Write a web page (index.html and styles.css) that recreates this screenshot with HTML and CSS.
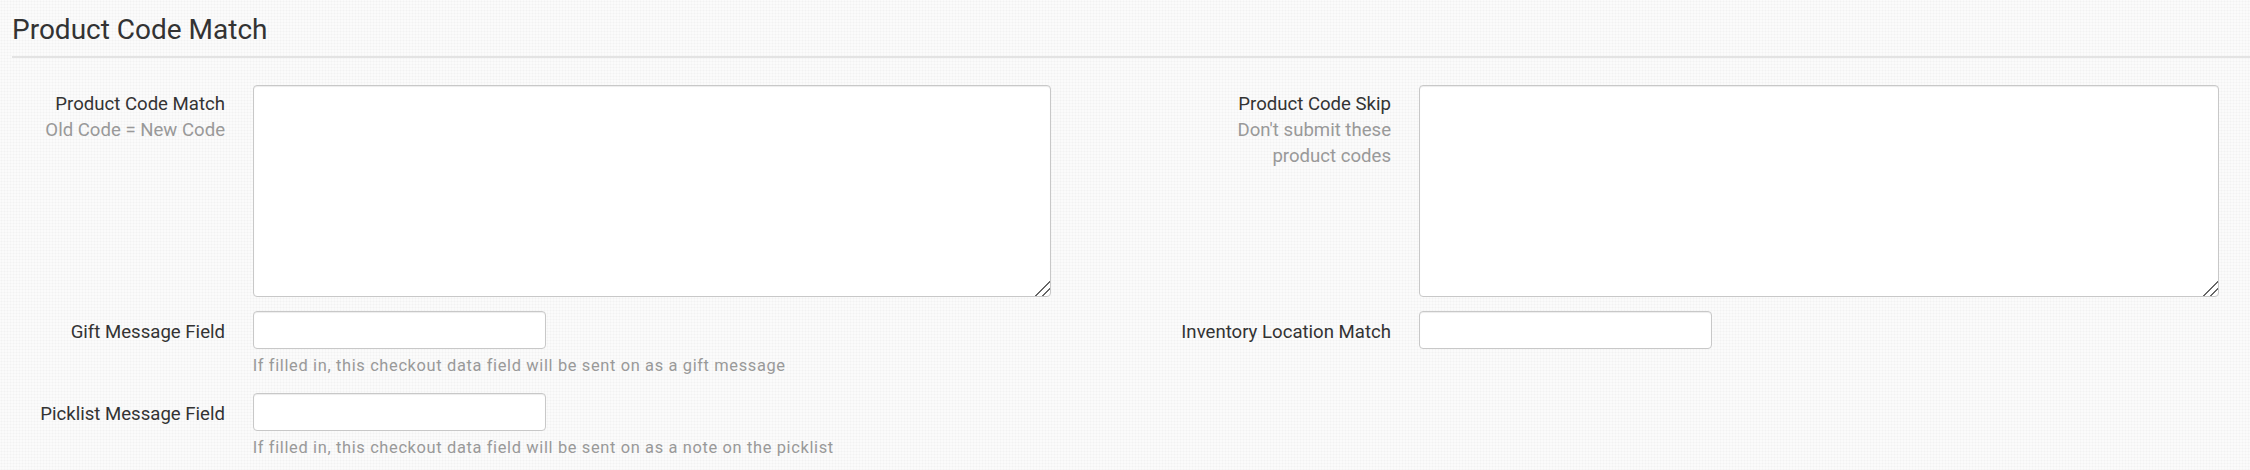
FILE: index.html
```html
<!DOCTYPE html>
<html lang="en">
<head>
<meta charset="utf-8">
<title>Product Code Match</title>
<link rel="stylesheet" href="styles.css">
</head>
<body>
<div class="page">
  <h3 class="section-title">Product Code Match</h3>
  <div class="rule"></div>
  <form class="form">
    <div class="row">
      <div class="group group-left">
        <label class="label">Product Code Match<span class="desc">Old Code = New Code</span></label>
        <div class="field"><textarea class="textarea textarea-left"></textarea></div>
      </div>
      <div class="group">
        <label class="label">Product Code Skip<span class="desc">Don't submit these product codes</span></label>
        <div class="field"><textarea class="textarea textarea-right"></textarea></div>
      </div>
    </div>
    <div class="row">
      <div class="group group-left">
        <label class="label label-input">Gift Message Field</label>
        <div class="field">
          <input class="input" type="text">
          <p class="help">If filled in, this checkout data field will be sent on as a gift message</p>
        </div>
      </div>
      <div class="group">
        <label class="label label-input">Inventory Location Match</label>
        <div class="field"><input class="input" type="text"></div>
      </div>
    </div>
    <div class="row">
      <div class="group group-left">
        <label class="label label-input">Picklist Message Field</label>
        <div class="field">
          <input class="input" type="text">
          <p class="help">If filled in, this checkout data field will be sent on as a note on the picklist</p>
        </div>
      </div>
    </div>
  </form>
</div>
</body>
</html>
```

FILE: styles.css
```css
html, body {
  margin: 0;
  padding: 0;
}

body {
  font-family: Roboto, "Liberation Sans", Arial, sans-serif;
  color: #333;
  background-color: #fbfbfb;
  background-image: radial-gradient(circle, #f2f2f2 0.9px, transparent 1.1px);
  background-size: 3px 3px;
  height: 470px;
  overflow: hidden;
}

.page {
  padding: 15px 0 0 12px;
}

.section-title {
  margin: 0;
  font-size: 28px;
  font-weight: 400;
  line-height: 1.1;
  color: #333;
}

.rule {
  margin-top: 10px;
  height: 2px;
  background: #e3e3e3;
}

.form {
  margin-top: 27.5px;
}

.row {
  display: flex;
  align-items: flex-start;
  margin-bottom: 14px;
}

.group {
  display: flex;
  align-items: flex-start;
}

.group-left {
  width: 1166px;
}

.label {
  width: 213px;
  flex: none;
  margin-right: 27.7px;
  padding-top: 6px;
  text-align: right;
  font-size: 18.6px;
  line-height: 26px;
  color: #333;
}

.label-input {
  padding-top: 8px;
}

.desc {
  display: block;
  color: #999;
}

.field {
  display: flex;
  flex-direction: column;
}

.textarea {
  box-sizing: border-box;
  height: 212px;
  margin: 0;
  padding: 6px 12px;
  border: 1px solid #c8c8c8;
  border-radius: 4px;
  background: #fff;
  box-shadow: inset 0 1px 1px rgba(0, 0, 0, 0.075);
  font-family: inherit;
  font-size: 18px;
  display: block;
}

.textarea::-webkit-resizer {
  background: linear-gradient(135deg,
    transparent 0, transparent 47%,
    #666 47%, #666 54%,
    transparent 54%, transparent 71%,
    #666 71%, #666 78%,
    transparent 78%);
}

.textarea-left {
  width: 798px;
}

.textarea-right {
  width: 800px;
}

.input {
  box-sizing: border-box;
  width: 293px;
  height: 38px;
  margin: 0;
  padding: 6px 12px;
  border: 1px solid #c8c8c8;
  border-radius: 4px;
  background: #fff;
  box-shadow: inset 0 1px 1px rgba(0, 0, 0, 0.075);
  font-family: inherit;
  font-size: 18px;
  display: block;
}

.help {
  margin: 5.5px 0 1.5px;
  font-size: 16.4px;
  letter-spacing: 0.65px;
  line-height: 22.9px;
  color: #999;
  white-space: nowrap;
}
```
